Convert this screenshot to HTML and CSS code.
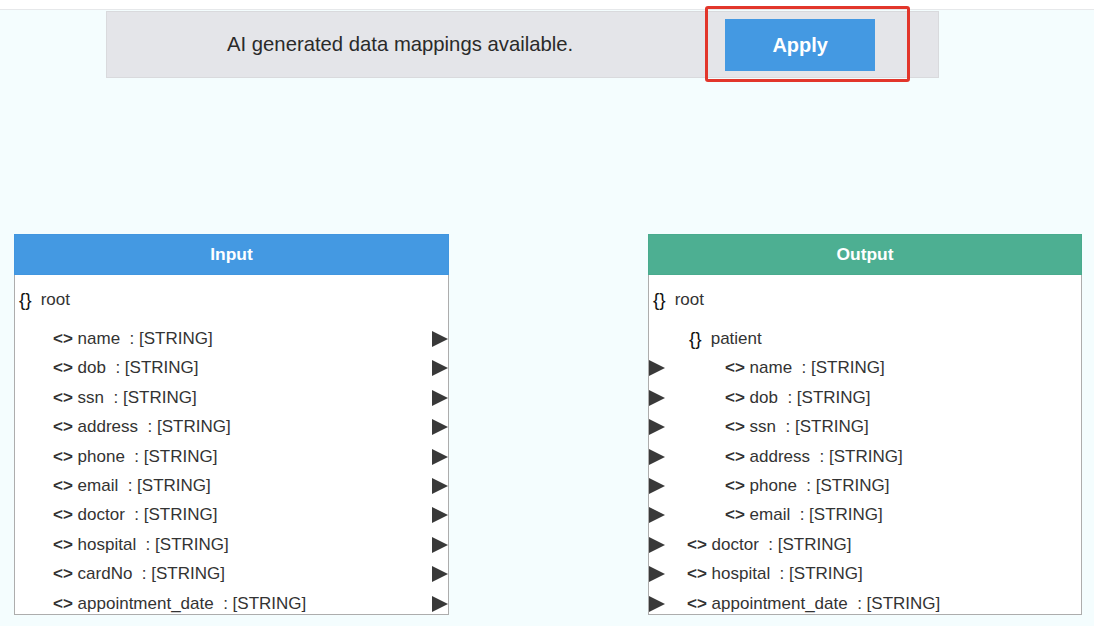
FILE: index.html
```html
<!DOCTYPE html>
<html lang="en">
<head>
<meta charset="utf-8">
<title>Data Mapper</title>
<link rel="stylesheet" href="styles.css">
</head>
<body>
<div class="topstrip"></div>
<div class="page">
  <div class="banner">
    <span class="banner-text">AI generated data mappings available.</span>
    <button class="apply">Apply</button>
    <div class="highlight"></div>
  </div>

  <div class="canvas">
    <div class="panel">
      <div class="panel-head head-input">Input</div>
      <div class="panel-body">
        <div class="row root-row lvl0"><span class="obj">{}</span>root</div>
        <div class="row lvl1"><span class="tag">&lt;&gt;</span> name  : [STRING]<span class="port port-out"></span></div>
        <div class="row lvl1"><span class="tag">&lt;&gt;</span> dob  : [STRING]<span class="port port-out"></span></div>
        <div class="row lvl1"><span class="tag">&lt;&gt;</span> ssn  : [STRING]<span class="port port-out"></span></div>
        <div class="row lvl1"><span class="tag">&lt;&gt;</span> address  : [STRING]<span class="port port-out"></span></div>
        <div class="row lvl1"><span class="tag">&lt;&gt;</span> phone  : [STRING]<span class="port port-out"></span></div>
        <div class="row lvl1"><span class="tag">&lt;&gt;</span> email  : [STRING]<span class="port port-out"></span></div>
        <div class="row lvl1"><span class="tag">&lt;&gt;</span> doctor  : [STRING]<span class="port port-out"></span></div>
        <div class="row lvl1"><span class="tag">&lt;&gt;</span> hospital  : [STRING]<span class="port port-out"></span></div>
        <div class="row lvl1"><span class="tag">&lt;&gt;</span> cardNo  : [STRING]<span class="port port-out"></span></div>
        <div class="row lvl1"><span class="tag">&lt;&gt;</span> appointment_date  : [STRING]<span class="port port-out"></span></div>
      </div>
    </div>

    <div class="panel panel-output">
      <div class="panel-head head-output">Output</div>
      <div class="panel-body">
        <div class="row root-row lvl0"><span class="obj">{}</span>root</div>
        <div class="row lvl1 obj-row"><span class="obj">{}</span>patient</div>
        <div class="row lvl2"><span class="port port-in"></span><span class="tag">&lt;&gt;</span> name  : [STRING]</div>
        <div class="row lvl2"><span class="port port-in"></span><span class="tag">&lt;&gt;</span> dob  : [STRING]</div>
        <div class="row lvl2"><span class="port port-in"></span><span class="tag">&lt;&gt;</span> ssn  : [STRING]</div>
        <div class="row lvl2"><span class="port port-in"></span><span class="tag">&lt;&gt;</span> address  : [STRING]</div>
        <div class="row lvl2"><span class="port port-in"></span><span class="tag">&lt;&gt;</span> phone  : [STRING]</div>
        <div class="row lvl2"><span class="port port-in"></span><span class="tag">&lt;&gt;</span> email  : [STRING]</div>
        <div class="row lvl1"><span class="port port-in"></span><span class="tag">&lt;&gt;</span> doctor  : [STRING]</div>
        <div class="row lvl1"><span class="port port-in"></span><span class="tag">&lt;&gt;</span> hospital  : [STRING]</div>
        <div class="row lvl1"><span class="port port-in"></span><span class="tag">&lt;&gt;</span> appointment_date  : [STRING]</div>
      </div>
    </div>
  </div>
</div>
</body>
</html>
```

FILE: styles.css
```css
* { box-sizing: border-box; }

html, body {
  margin: 0;
  padding: 0;
  height: 100%;
}

body {
  font-family: "Liberation Sans", Arial, Helvetica, sans-serif;
  color: #333;
  background: #f4fdfe;
  overflow: hidden;
}

.topstrip {
  height: 10px;
  background: #fff;
  border-bottom: 1px solid #e6e8ea;
}

.page {
  padding-top: 1px;
}

.banner {
  position: relative;
  margin-left: 106px;
  width: 833px;
  height: 67px;
  background: #e4e5e9;
  border: 1px solid #d9dadd;
  display: flex;
  align-items: center;
  padding-left: 120px;
  gap: 152px;
}

.banner-text {
  font-size: 20.3px;
  color: #2a2a2a;
  white-space: nowrap;
}

.apply {
  width: 150px;
  height: 52px;
  border: 0;
  background: #4499e2;
  color: #fff;
  font-family: "Liberation Sans", Arial, Helvetica, sans-serif;
  font-size: 20px;
  font-weight: bold;
  margin-top: 1px;
  padding: 0;
}

.highlight {
  position: absolute;
  left: 598px;
  top: -6px;
  width: 205px;
  height: 76px;
  border: 3px solid #e2362b;
  border-radius: 3px;
  pointer-events: none;
}

.canvas {
  display: flex;
  gap: 199px;
  padding-left: 14px;
  margin-top: 156px;
}

.panel {
  width: 435px;
  display: flex;
  flex-direction: column;
}

.panel-output {
  width: 434px;
}

.panel-head {
  height: 41px;
  display: flex;
  align-items: center;
  justify-content: center;
  color: #fff;
  font-weight: bold;
  font-size: 17.4px;
}

.head-input { background: #4499e2; border: 1px solid #4196df; }
.head-output { background: #4daf92; border: 1px solid #49ab8e; }

.panel-body {
  height: 340px;
  background: #fff;
  border: 1px solid #adadad;
  border-top: 0;
  padding-top: 10px;
  overflow: hidden;
}

.row {
  position: relative;
  height: 29.45px;
  display: flex;
  align-items: center;
  font-size: 17px;
  white-space: pre;
  color: #333;
}

.root-row { margin-bottom: 9.6px; }

.lvl0 { padding-left: 4px; }
.lvl1 { padding-left: 38px; }
.lvl2 { padding-left: 76px; }
.obj-row { padding-left: 40px; }

.obj {
  font-weight: normal;
  color: #111;
  margin-right: 9px;
  font-size: 19px;
}

.tag {
  font-weight: bold;
  color: #333;
}

.port {
  position: absolute;
  width: 0;
  height: 0;
  border-top: 8.5px solid transparent;
  border-bottom: 8.5px solid transparent;
  border-left: 16px solid #393939;
  top: 50%;
  margin-top: -8px;
}

.port-out { right: 0; }
.port-in { left: 0; }
```
